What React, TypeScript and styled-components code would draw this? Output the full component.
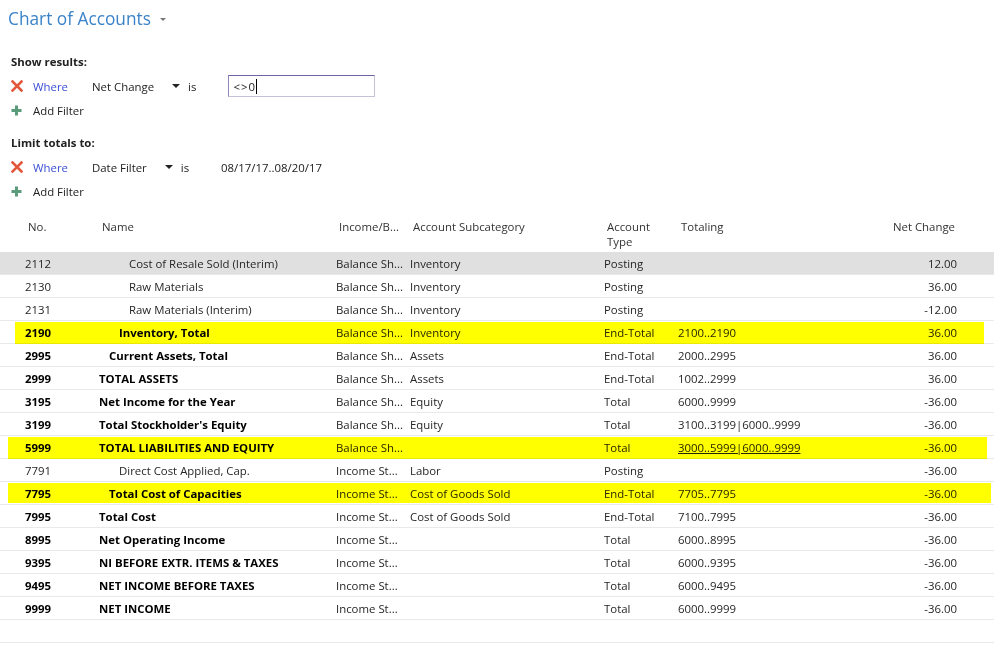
import React from "react";
import styled, { createGlobalStyle, css } from "styled-components";

const GlobalStyle = createGlobalStyle`
  html, body { margin: 0; padding: 0; background: #fff; }
  body { font-family: "Segoe UI", "Open Sans", sans-serif; font-size: 11.4px; color: #212121; }
  * { box-sizing: border-box; }
`;

const Page = styled.div`
  width: 994px;
  height: 645px;
  overflow: hidden;
  display: flex;
  flex-direction: column;
`;

const TitleBar = styled.div`
  height: 38px;
  padding-left: 8px;
  display: flex;
  align-items: center;
  gap: 9px;
`;

const Title = styled.h1`
  margin: 0;
  font-size: 17.3px;
  font-weight: 400;
  color: #3a83c9;
  line-height: 38px;
`;

const Caret = styled.span<{ $color?: string; $w?: number }>`
  display: inline-block;
  width: 0;
  height: 0;
  border-left: ${(p) => (p.$w ?? 8) / 2}px solid transparent;
  border-right: ${(p) => (p.$w ?? 8) / 2}px solid transparent;
  border-top: ${(p) => (p.$w ?? 8) / 2}px solid ${(p) => p.$color ?? "#222"};
`;

const FilterArea = styled.div`
  padding-left: 11px;
  display: flex;
  flex-direction: column;
`;

const SectionLabel = styled.div<{ $top: number }>`
  margin-top: ${(p) => p.$top}px;
  margin-bottom: 1px;
  height: 22px;
  line-height: 22px;
  font-weight: 700;
  color: #222;
`;

const FilterRow = styled.div`
  height: 24px;
  display: flex;
  align-items: center;
`;

const IconSlot = styled.span`
  width: 22px;
  display: flex;
  align-items: center;
`;

const WhereLink = styled.span`
  width: 59px;
  color: #3b4fd6;
`;

const FieldName = styled.span`
  margin-right: 18px;
  color: #222;
`;

const IsWord = styled.span`
  margin-left: 8px;
  margin-right: 32px;
`;

const ValueInput = styled.div`
  width: 147px;
  height: 22px;
  border: 1px solid #c4c2d6;
  border-top-color: #6f64a8;
  border-left-color: #8e86bd;
  padding-left: 4px;
  display: flex;
  align-items: center;
  color: #222;
  letter-spacing: 1px;
`;

const TextCursor = styled.span`
  display: inline-block;
  width: 1px;
  height: 15px;
  background: #000;
`;

const ValueText = styled.span`
  margin-left: 0;
`;

const AddFilter = styled.span`
  color: #222;
`;

const Table = styled.div`
  margin-top: 8px;
  display: flex;
  flex-direction: column;
`;

const gridCols = css`
  display: grid;
  grid-template-columns: 74px 237px 74px 194px 74px 1fr 79px;
  padding-left: 25px;
  padding-right: 37px;
`;

const HeaderRow = styled.div`
  ${gridCols};
  height: 41px;
  padding-top: 8px;
  line-height: 15px;
  color: #333;
`;

const HeaderCell = styled.div<{ $right?: boolean }>`
  padding-left: ${(p) => (p.$right ? 0 : 3)}px;
  padding-right: ${(p) => (p.$right ? 2 : 0)}px;
  text-align: ${(p) => (p.$right ? "right" : "left")};
`;

type Mark = { top: number; height: number; left: number; right: number };

const Row = styled.div<{ $selected?: boolean; $bold?: boolean; $mark?: Mark }>`
  ${gridCols};
  position: relative;
  height: 23px;
  padding-top: 2px;
  line-height: 20px;
  border-bottom: 1px solid #e9e9e9;
  background: ${(p) => (p.$selected ? "#e0e0e0" : "#fff")};
  font-weight: ${(p) => (p.$bold ? 700 : 400)};
  color: ${(p) => (p.$bold ? "#000" : "#262626")};
  white-space: nowrap;
  ${(p) =>
    p.$mark &&
    css`
      &::after {
        content: "";
        position: absolute;
        top: ${p.$mark.top}px;
        height: ${p.$mark.height}px;
        left: ${p.$mark.left}px;
        right: ${p.$mark.right}px;
        background: #ffff00;
        mix-blend-mode: multiply;
        pointer-events: none;
      }
    `}
`;

const Cell = styled.div<{ $right?: boolean; $indent?: number; $plain?: boolean; $link?: boolean }>`
  overflow: hidden;
  text-align: ${(p) => (p.$right ? "right" : "left")};
  padding-left: ${(p) => (p.$indent ?? 0) * 10}px;
  font-weight: ${(p) => (p.$plain ? 400 : "inherit")};
  color: ${(p) => (p.$plain ? "#262626" : "inherit")};
  text-decoration: ${(p) => (p.$link ? "underline" : "none")};
`;

const EmptyRow = styled.div`
  height: 23px;
  border-bottom: 1px solid #e9e9e9;
`;

const XIcon = () => (
  <svg width="12" height="12" viewBox="0 0 12 12">
    <path d="M1.5 1.5 L10.5 10.5 M10.5 1.5 L1.5 10.5" stroke="#e2583b" strokeWidth="2.6" strokeLinecap="square" />
  </svg>
);

const PlusIcon = () => (
  <svg width="11" height="11" viewBox="0 0 11 11">
    <path d="M5.5 0.5 V10.5 M0.5 5.5 H10.5" stroke="#5a9b7b" strokeWidth="3" />
  </svg>
);

type Acc = {
  no: string;
  name: string;
  indent: number;
  bold: boolean;
  ib: string;
  sub: string;
  type: string;
  totaling: string;
  net: string;
  selected?: boolean;
  mark?: Mark;
  link?: boolean;
};

const BS = "Balance Sh...";
const IS = "Income St...";

const rows: Acc[] = [
  { no: "2112", name: "Cost of Resale Sold (Interim)", indent: 3, bold: false, ib: BS, sub: "Inventory", type: "Posting", totaling: "", net: "12.00", selected: true },
  { no: "2130", name: "Raw Materials", indent: 3, bold: false, ib: BS, sub: "Inventory", type: "Posting", totaling: "", net: "36.00" },
  { no: "2131", name: "Raw Materials (Interim)", indent: 3, bold: false, ib: BS, sub: "Inventory", type: "Posting", totaling: "", net: "-12.00" },
  { no: "2190", name: "Inventory, Total", indent: 2, bold: true, ib: BS, sub: "Inventory", type: "End-Total", totaling: "2100..2190", net: "36.00", mark: { top: 1, height: 25, left: 15, right: 10 } },
  { no: "2995", name: "Current Assets, Total", indent: 1, bold: true, ib: BS, sub: "Assets", type: "End-Total", totaling: "2000..2995", net: "36.00" },
  { no: "2999", name: "TOTAL ASSETS", indent: 0, bold: true, ib: BS, sub: "Assets", type: "End-Total", totaling: "1002..2999", net: "36.00" },
  { no: "3195", name: "Net Income for the Year", indent: 0, bold: true, ib: BS, sub: "Equity", type: "Total", totaling: "6000..9999", net: "-36.00" },
  { no: "3199", name: "Total Stockholder's Equity", indent: 0, bold: true, ib: BS, sub: "Equity", type: "Total", totaling: "3100..3199|6000..9999", net: "-36.00" },
  { no: "5999", name: "TOTAL LIABILITIES AND EQUITY", indent: 0, bold: true, ib: BS, sub: "", type: "Total", totaling: "3000..5999|6000..9999", net: "-36.00", link: true, mark: { top: 1, height: 24, left: 8, right: 7 } },
  { no: "7791", name: "Direct Cost Applied, Cap.", indent: 2, bold: false, ib: IS, sub: "Labor", type: "Posting", totaling: "", net: "-36.00" },
  { no: "7795", name: "Total Cost of Capacities", indent: 1, bold: true, ib: IS, sub: "Cost of Goods Sold", type: "End-Total", totaling: "7705..7795", net: "-36.00", mark: { top: 1, height: 20, left: 8, right: 3 } },
  { no: "7995", name: "Total Cost", indent: 0, bold: true, ib: IS, sub: "Cost of Goods Sold", type: "End-Total", totaling: "7100..7995", net: "-36.00" },
  { no: "8995", name: "Net Operating Income", indent: 0, bold: true, ib: IS, sub: "", type: "Total", totaling: "6000..8995", net: "-36.00" },
  { no: "9395", name: "NI BEFORE EXTR. ITEMS & TAXES", indent: 0, bold: true, ib: IS, sub: "", type: "Total", totaling: "6000..9395", net: "-36.00" },
  { no: "9495", name: "NET INCOME BEFORE TAXES", indent: 0, bold: true, ib: IS, sub: "", type: "Total", totaling: "6000..9495", net: "-36.00" },
  { no: "9999", name: "NET INCOME", indent: 0, bold: true, ib: IS, sub: "", type: "Total", totaling: "6000..9999", net: "-36.00" },
];

export default function App() {
  return (
    <Page>
      <GlobalStyle />
      <TitleBar>
        <Title>Chart of Accounts</Title>
        <Caret $color="#777" $w={6} />
      </TitleBar>
      <FilterArea>
        <SectionLabel $top={13}>Show results:</SectionLabel>
        <FilterRow>
          <IconSlot><XIcon /></IconSlot>
          <WhereLink>Where</WhereLink>
          <FieldName>Net Change</FieldName>
          <Caret />
          <IsWord>is</IsWord>
          <ValueInput>
            &lt;&gt;0
            <TextCursor />
          </ValueInput>
        </FilterRow>
        <FilterRow>
          <IconSlot><PlusIcon /></IconSlot>
          <AddFilter>Add Filter</AddFilter>
        </FilterRow>
        <SectionLabel $top={10}>Limit totals to:</SectionLabel>
        <FilterRow>
          <IconSlot><XIcon /></IconSlot>
          <WhereLink>Where</WhereLink>
          <FieldName>Date Filter</FieldName>
          <Caret />
          <IsWord>is</IsWord>
          <ValueText>08/17/17..08/20/17</ValueText>
        </FilterRow>
        <FilterRow>
          <IconSlot><PlusIcon /></IconSlot>
          <AddFilter>Add Filter</AddFilter>
        </FilterRow>
      </FilterArea>
      <Table>
        <HeaderRow>
          <HeaderCell>No.</HeaderCell>
          <HeaderCell>Name</HeaderCell>
          <HeaderCell>Income/B...</HeaderCell>
          <HeaderCell>Account Subcategory</HeaderCell>
          <HeaderCell>Account<br />Type</HeaderCell>
          <HeaderCell>Totaling</HeaderCell>
          <HeaderCell $right>Net Change</HeaderCell>
        </HeaderRow>
        {rows.map((r) => (
          <Row key={r.no} $selected={r.selected} $bold={r.bold} $mark={r.mark}>
            <Cell>{r.no}</Cell>
            <Cell $indent={r.indent}>{r.name}</Cell>
            <Cell $plain>{r.ib}</Cell>
            <Cell $plain>{r.sub}</Cell>
            <Cell $plain>{r.type}</Cell>
            <Cell $plain $link={r.link}>{r.totaling}</Cell>
            <Cell $plain $right>{r.net}</Cell>
          </Row>
        ))}
        <EmptyRow />
      </Table>
    </Page>
  );
}
